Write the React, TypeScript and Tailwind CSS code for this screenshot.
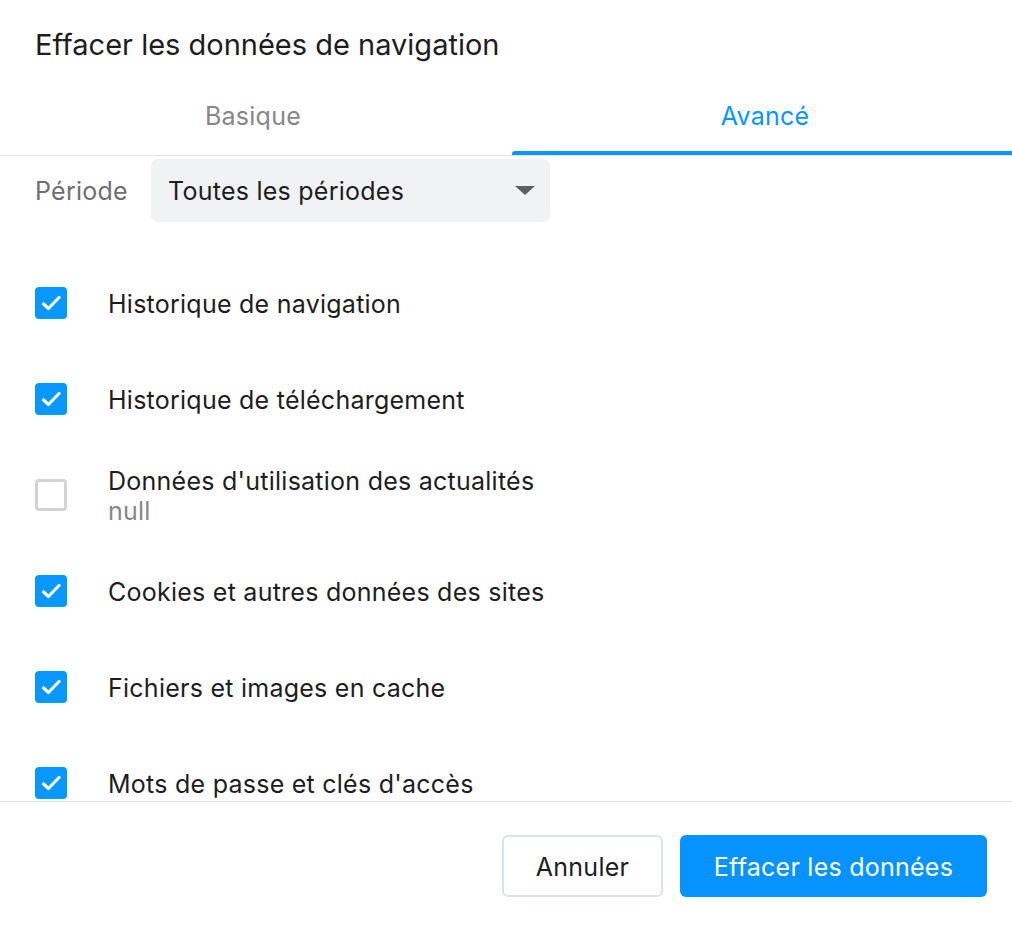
import React from 'react'

const font = { fontFamily: 'Inter, "Noto Sans", sans-serif' }

const items = [
  { label: 'Historique de navigation', checked: true },
  { label: 'Historique de téléchargement', checked: true },
  { label: "Données d'utilisation des actualités", sub: 'null', checked: false },
  { label: 'Cookies et autres données des sites', checked: true },
  { label: 'Fichiers et images en cache', checked: true },
  { label: "Mots de passe et clés d'accès", checked: true },
]

function Checkbox({ checked }: { checked: boolean }) {
  if (!checked) {
    return <div className="w-8 h-8 shrink-0 rounded-[4px] border-[3px] border-[#d2d2d7] bg-white" />
  }
  return (
    <div className="w-8 h-8 shrink-0 rounded-[4px] bg-[#0797fd]">
      <svg width="32" height="32" viewBox="0 0 32 32" fill="none">
        <path d="M8.5 17 L13.5 21.5 L24 10.5" stroke="white" strokeWidth="3.2" strokeLinecap="round" strokeLinejoin="round" />
      </svg>
    </div>
  )
}

export default function App() {
  return (
    <div className="w-[1012px] h-[925px] bg-white flex flex-col text-[#1d1d1f] overflow-hidden text-[25px] tracking-[0.01em]" style={font}>
      {/* Title */}
      <div className="h-[78px] pl-[35px] pt-[28px]">
        <h1 className="text-[29px] leading-[34px] font-normal tracking-normal">Effacer les données de navigation</h1>
      </div>

      {/* Tabs */}
      <div className="flex border-b border-[#e2e2e2]">
        <div className="w-[506px] h-[77px] flex items-center justify-center text-[#86868b]">Basique</div>
        <div className="flex-1 ml-[6px] h-[77px] flex items-center justify-center pl-[6px] text-[#0797fd] relative">
          Avancé
          <div className="absolute left-0 right-0 bottom-0 h-[4px] bg-[#0797fd] rounded-tl-[3px]" />
        </div>
      </div>

      {/* Scroll area */}
      <div className="h-[645px] overflow-hidden">
        <div className="flex items-center pl-[35px] mt-[3px]">
          <span className="w-[116px] pt-[2px] text-[#6e6e73]">Période</span>
          <div className="w-[399px] h-[63px] rounded-[7px] bg-[#f1f2f4] flex items-center justify-between pl-[17px] pr-[15px]">
            <span className="pt-[3px]">Toutes les périodes</span>
            <svg width="20" height="10" viewBox="0 0 20 10">
              <path d="M0 0 L20 0 L10 9 Z" fill="#5f6064" />
            </svg>
          </div>
        </div>

        <div className="mt-[33px]">
          {items.map((item) => (
            <div key={item.label} className="h-[96px] flex items-center pl-[35px]">
              <Checkbox checked={item.checked} />
              <div className="ml-[41px] pt-[2px] leading-[30px]">
                <div>{item.label}</div>
                {item.sub && <div className="text-[#86868b]">{item.sub}</div>}
              </div>
            </div>
          ))}
        </div>
      </div>

      {/* Footer */}
      <div className="border-t border-[#e2e2e2] flex justify-end gap-[17px] pt-[33px] pr-[25px]">
        <button className="w-[161px] h-[62px] pt-[4px] rounded-[6px] border-2 border-[#dbe3ea] bg-white text-[#1d1d1f] tracking-[0.01em]">Annuler</button>
        <button className="w-[307px] h-[62px] pt-[4px] rounded-[6px] bg-[#0793fe] text-white tracking-[0.01em]">Effacer les données</button>
      </div>
    </div>
  )
}
